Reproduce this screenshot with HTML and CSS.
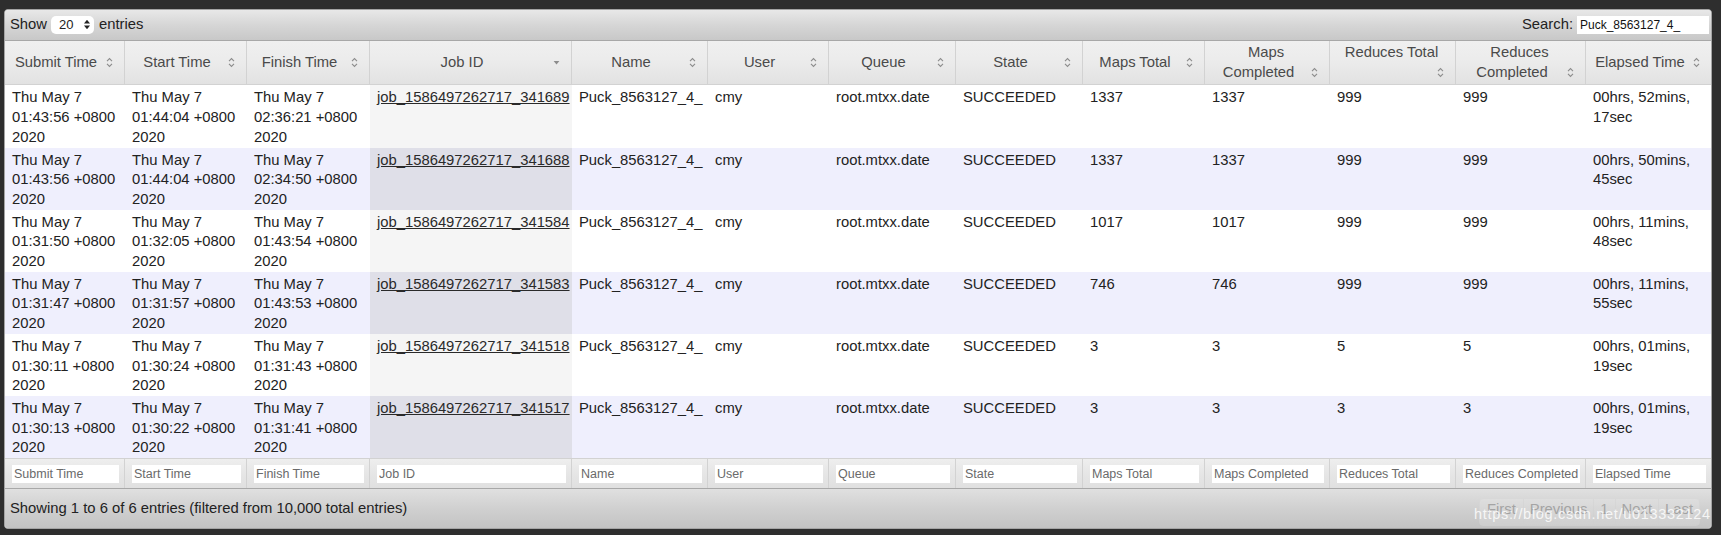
FILE: index.html
```html
<!DOCTYPE html>
<html lang="en">
<head>
<meta charset="utf-8">
<title>JobHistory</title>
<link rel="stylesheet" href="styles.css">
</head>
<body>
<div class="page">
  <div class="panel">
    <div class="toolbar toolbar-top">
      <div class="length">Show <span class="select"><span class="select-val">20</span><svg class="select-arrows" width="6" height="11" viewBox="0 0 6 11"><polygon points="0,4.5 3,0.8 6,4.5" fill="#222"/><polygon points="0,6.5 6,6.5 3,10.2" fill="#222"/></svg></span> entries</div>
      <div class="search">Search: <input class="search-input" type="text" value="Puck_8563127_4_"></div>
    </div>
    <table class="jobs">
      <colgroup>
        <col style="width:120px"><col style="width:122px"><col style="width:123px"><col style="width:202px"><col style="width:136px"><col style="width:121px"><col style="width:127px"><col style="width:127px"><col style="width:122px"><col style="width:125px"><col style="width:126px"><col style="width:130px"><col style="width:125px">
      </colgroup>
      <thead>
        <tr>
          <th>Submit Time<span class="si"><svg width="7" height="11" viewBox="0 0 7 11"><path d="M1 4.2 L3.5 1.6 L6 4.2 M1 6.8 L3.5 9.4 L6 6.8" fill="none" stroke="#8c8c8c" stroke-width="1.1"/></svg></span></th>
          <th>Start Time<span class="si"><svg width="7" height="11" viewBox="0 0 7 11"><path d="M1 4.2 L3.5 1.6 L6 4.2 M1 6.8 L3.5 9.4 L6 6.8" fill="none" stroke="#8c8c8c" stroke-width="1.1"/></svg></span></th>
          <th>Finish Time<span class="si"><svg width="7" height="11" viewBox="0 0 7 11"><path d="M1 4.2 L3.5 1.6 L6 4.2 M1 6.8 L3.5 9.4 L6 6.8" fill="none" stroke="#8c8c8c" stroke-width="1.1"/></svg></span></th>
          <th>Job ID<span class="si"><svg width="7" height="11" viewBox="0 0 7 11"><polygon points="0.6,4 6.4,4 3.5,7.4" fill="#8c8c8c"/></svg></span></th>
          <th>Name<span class="si"><svg width="7" height="11" viewBox="0 0 7 11"><path d="M1 4.2 L3.5 1.6 L6 4.2 M1 6.8 L3.5 9.4 L6 6.8" fill="none" stroke="#8c8c8c" stroke-width="1.1"/></svg></span></th>
          <th>User<span class="si"><svg width="7" height="11" viewBox="0 0 7 11"><path d="M1 4.2 L3.5 1.6 L6 4.2 M1 6.8 L3.5 9.4 L6 6.8" fill="none" stroke="#8c8c8c" stroke-width="1.1"/></svg></span></th>
          <th>Queue<span class="si"><svg width="7" height="11" viewBox="0 0 7 11"><path d="M1 4.2 L3.5 1.6 L6 4.2 M1 6.8 L3.5 9.4 L6 6.8" fill="none" stroke="#8c8c8c" stroke-width="1.1"/></svg></span></th>
          <th>State<span class="si"><svg width="7" height="11" viewBox="0 0 7 11"><path d="M1 4.2 L3.5 1.6 L6 4.2 M1 6.8 L3.5 9.4 L6 6.8" fill="none" stroke="#8c8c8c" stroke-width="1.1"/></svg></span></th>
          <th>Maps Total<span class="si"><svg width="7" height="11" viewBox="0 0 7 11"><path d="M1 4.2 L3.5 1.6 L6 4.2 M1 6.8 L3.5 9.4 L6 6.8" fill="none" stroke="#8c8c8c" stroke-width="1.1"/></svg></span></th>
          <th>Maps Completed<span class="si"><svg width="7" height="11" viewBox="0 0 7 11"><path d="M1 4.2 L3.5 1.6 L6 4.2 M1 6.8 L3.5 9.4 L6 6.8" fill="none" stroke="#8c8c8c" stroke-width="1.1"/></svg></span></th>
          <th>Reduces Total<span class="si"><svg width="7" height="11" viewBox="0 0 7 11"><path d="M1 4.2 L3.5 1.6 L6 4.2 M1 6.8 L3.5 9.4 L6 6.8" fill="none" stroke="#8c8c8c" stroke-width="1.1"/></svg></span></th>
          <th>Reduces Completed<span class="si"><svg width="7" height="11" viewBox="0 0 7 11"><path d="M1 4.2 L3.5 1.6 L6 4.2 M1 6.8 L3.5 9.4 L6 6.8" fill="none" stroke="#8c8c8c" stroke-width="1.1"/></svg></span></th>
          <th class="last">Elapsed Time<span class="si"><svg width="7" height="11" viewBox="0 0 7 11"><path d="M1 4.2 L3.5 1.6 L6 4.2 M1 6.8 L3.5 9.4 L6 6.8" fill="none" stroke="#8c8c8c" stroke-width="1.1"/></svg></span></th>
        </tr>
      </thead>
      <tbody>
        <tr class="odd">
          <td>Thu May 7 01:43:56 +0800 2020</td><td>Thu May 7 01:44:04 +0800 2020</td><td>Thu May 7 02:36:21 +0800 2020</td>
          <td class="sorted"><a href="#">job_1586497262717_341689</a></td><td class="nw">Puck_8563127_4_</td><td>cmy</td><td>root.mtxx.date</td><td>SUCCEEDED</td><td>1337</td><td>1337</td><td>999</td><td>999</td><td>00hrs, 52mins, 17sec</td>
        </tr>
        <tr class="even">
          <td>Thu May 7 01:43:56 +0800 2020</td><td>Thu May 7 01:44:04 +0800 2020</td><td>Thu May 7 02:34:50 +0800 2020</td>
          <td class="sorted"><a href="#">job_1586497262717_341688</a></td><td class="nw">Puck_8563127_4_</td><td>cmy</td><td>root.mtxx.date</td><td>SUCCEEDED</td><td>1337</td><td>1337</td><td>999</td><td>999</td><td>00hrs, 50mins, 45sec</td>
        </tr>
        <tr class="odd">
          <td>Thu May 7 01:31:50 +0800 2020</td><td>Thu May 7 01:32:05 +0800 2020</td><td>Thu May 7 01:43:54 +0800 2020</td>
          <td class="sorted"><a href="#">job_1586497262717_341584</a></td><td class="nw">Puck_8563127_4_</td><td>cmy</td><td>root.mtxx.date</td><td>SUCCEEDED</td><td>1017</td><td>1017</td><td>999</td><td>999</td><td>00hrs, 11mins, 48sec</td>
        </tr>
        <tr class="even">
          <td>Thu May 7 01:31:47 +0800 2020</td><td>Thu May 7 01:31:57 +0800 2020</td><td>Thu May 7 01:43:53 +0800 2020</td>
          <td class="sorted"><a href="#">job_1586497262717_341583</a></td><td class="nw">Puck_8563127_4_</td><td>cmy</td><td>root.mtxx.date</td><td>SUCCEEDED</td><td>746</td><td>746</td><td>999</td><td>999</td><td>00hrs, 11mins, 55sec</td>
        </tr>
        <tr class="odd">
          <td>Thu May 7 01:30:11 +0800 2020</td><td>Thu May 7 01:30:24 +0800 2020</td><td>Thu May 7 01:31:43 +0800 2020</td>
          <td class="sorted"><a href="#">job_1586497262717_341518</a></td><td class="nw">Puck_8563127_4_</td><td>cmy</td><td>root.mtxx.date</td><td>SUCCEEDED</td><td>3</td><td>3</td><td>5</td><td>5</td><td>00hrs, 01mins, 19sec</td>
        </tr>
        <tr class="even">
          <td>Thu May 7 01:30:13 +0800 2020</td><td>Thu May 7 01:30:22 +0800 2020</td><td>Thu May 7 01:31:41 +0800 2020</td>
          <td class="sorted"><a href="#">job_1586497262717_341517</a></td><td class="nw">Puck_8563127_4_</td><td>cmy</td><td>root.mtxx.date</td><td>SUCCEEDED</td><td>3</td><td>3</td><td>3</td><td>3</td><td>00hrs, 01mins, 19sec</td>
        </tr>
      </tbody>
      <tfoot>
        <tr>
          <th><input class="filter" type="text" value="Submit Time"></th>
          <th><input class="filter" type="text" value="Start Time"></th>
          <th><input class="filter" type="text" value="Finish Time"></th>
          <th><input class="filter" type="text" value="Job ID"></th>
          <th><input class="filter" type="text" value="Name"></th>
          <th><input class="filter" type="text" value="User"></th>
          <th><input class="filter" type="text" value="Queue"></th>
          <th><input class="filter" type="text" value="State"></th>
          <th><input class="filter" type="text" value="Maps Total"></th>
          <th><input class="filter" type="text" value="Maps Completed"></th>
          <th><input class="filter" type="text" value="Reduces Total"></th>
          <th><input class="filter" type="text" value="Reduces Completed"></th>
          <th class="last"><input class="filter" type="text" value="Elapsed Time"></th>
        </tr>
      </tfoot>
    </table>
    <div class="toolbar toolbar-bottom">
      <div class="info">Showing 1 to 6 of 6 entries (filtered from 10,000 total entries)</div>
      <div class="paginate">
        <span class="pbtn">First</span><span class="pbtn">Previous</span><span class="pbtn">1</span><span class="pbtn">Next</span><span class="pbtn">Last</span>
      </div>
    </div>
  </div>
  <div class="watermark">https://blog.csdn.net/u013332124</div>
</div>
</body>
</html>
```
FILE: styles.css
```css
html, body {
  margin: 0;
  padding: 0;
}
body {
  background: #2e2e2e;
  font-family: "Liberation Sans", Arial, sans-serif;
  font-size: 14.8px;
  line-height: 19.7px;
  color: #222;
}
.page {
  position: relative;
  padding: 9px 9px 8px 4px;
}
.panel {
  width: 1708px;
  box-sizing: border-box;
  border: 1px solid #a4a4a4;
  border-radius: 4px;
  overflow: hidden;
  background: #fff;
}
.toolbar {
  display: flex;
  justify-content: space-between;
  align-items: center;
  box-sizing: border-box;
  color: #222;
}
.toolbar-top {
  height: 31px;
  padding: 0 2px 0 5px;
  border-bottom: 1px solid #a8a8a8;
  background: linear-gradient(#e8e8e8, #d6d6d6 50%, #c8c8c8);
}
.length {
  display: flex;
  align-items: center;
}
.select {
  display: inline-flex;
  align-items: center;
  justify-content: space-between;
  box-sizing: border-box;
  width: 43px;
  height: 18px;
  margin: 0 5px 0 4px;
  padding: 0 4px 0 8px;
  background: #fff;
  border-radius: 5px;
  font-size: 13px;
  color: #222;
}
.search {
  display: flex;
  align-items: center;
}
.search-input {
  box-sizing: border-box;
  width: 132px;
  height: 18px;
  margin: 0 0 0 4px;
  padding: 0 3px;
  border: none;
  outline: none;
  background: #fff;
  font-family: "Liberation Sans", Arial, sans-serif;
  font-size: 12px;
  color: #111;
}
table.jobs {
  table-layout: fixed;
  width: 1706px;
  border-collapse: separate;
  border-spacing: 0;
}
table.jobs thead th {
  box-sizing: border-box;
  height: 43px;
  padding: 2px 10px 2px 8px;
  vertical-align: middle;
  text-align: center;
  font-weight: normal;
  color: #4a4a4a;
  background: linear-gradient(#f0f0f0, #ebebeb 50%, #e2e2e2);
  border-right: 1px solid #d2d2d2;
  border-bottom: 1px solid #d2d2d2;
}
table.jobs th.last {
  border-right: none;
}
.si {
  float: right;
  display: flex;
  align-items: center;
  height: 19.7px;
  width: 8px;
  margin-left: 7px;
}
table.jobs tbody tr {
  height: 62px;
}
table.jobs tbody td {
  box-sizing: border-box;
  padding: 3px 6px 0 7px;
  vertical-align: top;
  text-align: left;
  color: #222;
}
table.jobs td.nw {
  white-space: nowrap;
  padding-right: 0;
}
tr.odd td {
  background: #ffffff;
}
tr.even td {
  background: #efeffd;
}
tr.odd td.sorted {
  background: #f5f5f5;
}
tr.even td.sorted {
  background: #dfdfe8;
}
table.jobs a {
  color: #2a2a2a;
  text-decoration: underline;
}
table.jobs tfoot th {
  box-sizing: border-box;
  height: 30px;
  padding: 0 5px 0 7px;
  vertical-align: middle;
  font-weight: normal;
  background: linear-gradient(#eeeeee, #e6e6e6 50%, #e0e0e0);
  border-top: 1px solid #d2d2d2;
  border-right: 1px solid #d2d2d2;
}
.filter {
  display: block;
  box-sizing: border-box;
  width: 100%;
  height: 18px;
  margin: 0;
  padding: 0 2px;
  border: none;
  outline: none;
  background: #fff;
  font-family: "Liberation Sans", Arial, sans-serif;
  font-size: 12.5px;
  color: #6a6a6a;
}
.toolbar-bottom {
  height: 40px;
  padding: 0 11px 0 5px;
  border-top: 1px solid #a8a8a8;
  background: linear-gradient(#e0e0e0, #d0d0d0 50%, #c3c3c3);
}
.paginate {
  display: flex;
  margin-top: 7px;
  opacity: 0.5;
}
.pbtn {
  box-sizing: border-box;
  height: 28px;
  padding: 1px 6px 0;
  margin-left: -1px;
  border: 1px solid #d8d8d8;
  background: linear-gradient(#e4e4e4, #d8d8d8);
  color: #777;
  border-radius: 0;
}
.pbtn:first-child {
  border-radius: 4px 0 0 4px;
  padding: 1px 7px 0;
}
.pbtn:last-child {
  border-radius: 0 4px 4px 0;
}
.watermark {
  position: absolute;
  left: 1474px;
  top: 506px;
  font-size: 14.5px;
  line-height: 17px;
  letter-spacing: 0.7px;
  color: rgba(255, 255, 255, 0.82);
  white-space: nowrap;
}
```
